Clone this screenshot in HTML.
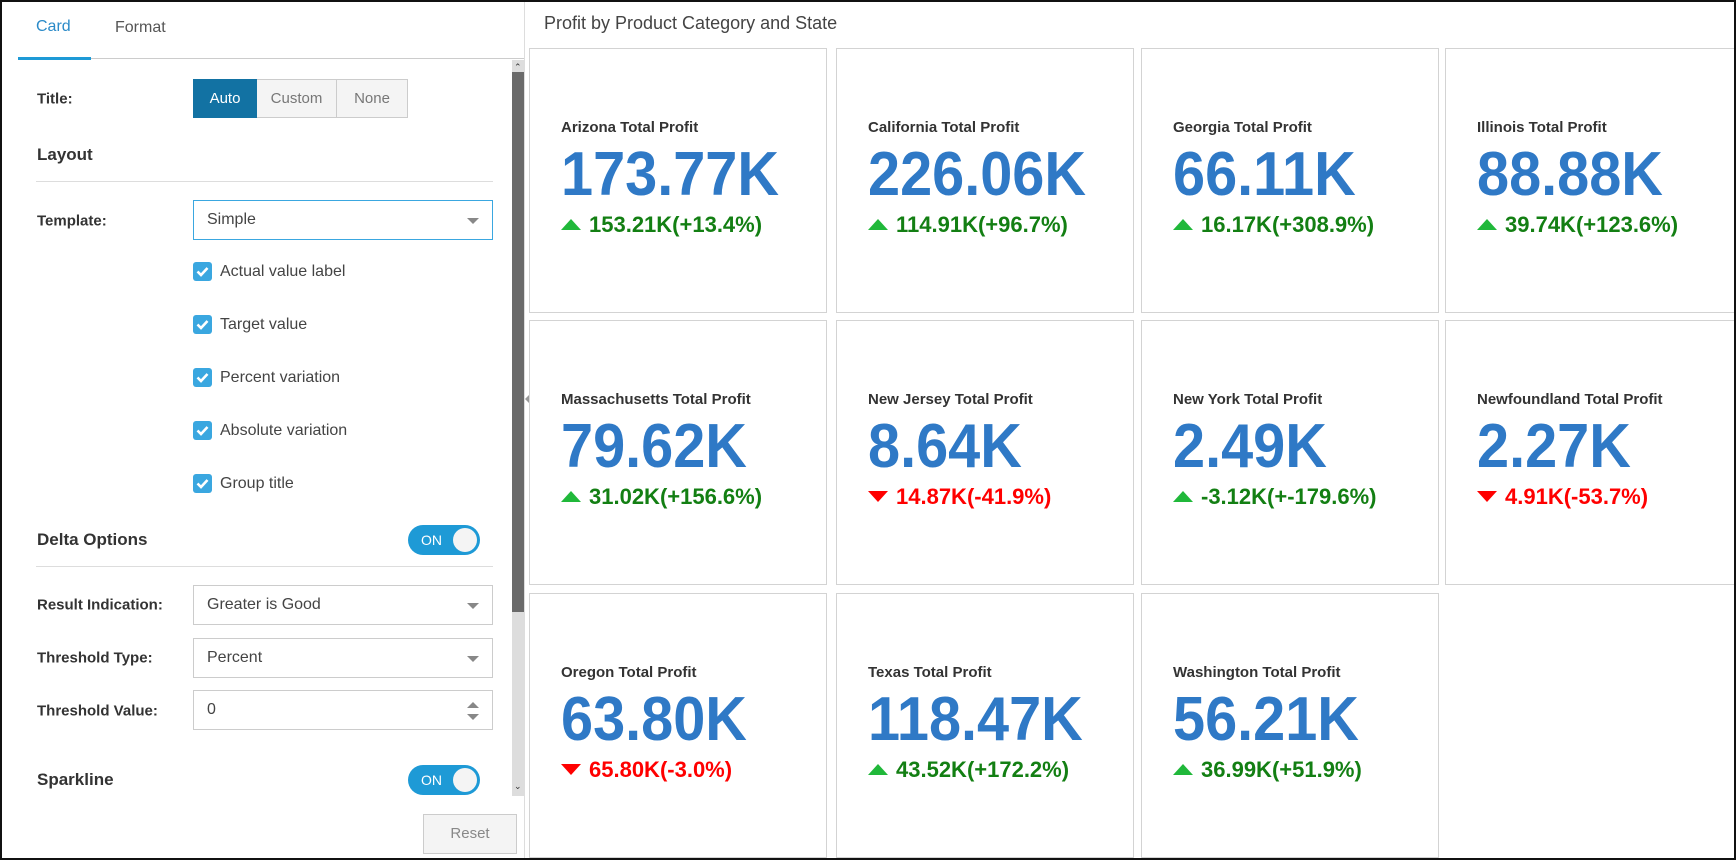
<!DOCTYPE html>
<html><head><meta charset="utf-8"><style>
*{box-sizing:border-box;margin:0;padding:0}
body{width:1736px;height:860px;overflow:hidden;background:#fff;font-family:"Liberation Sans",Arial,sans-serif;color:#333;position:relative}
.frame{position:absolute;left:0;top:0;width:1736px;height:860px;border:2px solid #111;pointer-events:none;z-index:10}
.abs{position:absolute}
.lbl{position:absolute;left:37px;font-size:15px;font-weight:bold;color:#333;transform:translateY(-50%)}
.hdr{position:absolute;left:37px;font-size:17px;font-weight:bold;color:#333;transform:translateY(-50%)}
.sel{position:absolute;left:193px;width:300px;height:40px;border:1px solid #ccc;font-size:16px;color:#444;padding:10px 13px}
.sel .arr{position:absolute;right:13px;top:17px;width:0;height:0;border-left:6px solid transparent;border-right:6px solid transparent;border-top:6px solid #888}
.cb{position:absolute;left:193px;width:19px;height:19px;background:#3aa7e0;border-radius:3px}
.cb svg{position:absolute;left:3px;top:4px}
.cbt{position:absolute;left:220px;font-size:16px;color:#444}
.tog{position:absolute;left:408px;width:72px;height:30px;border-radius:15px;background:#1e9ad6}
.tog span{position:absolute;left:13px;top:7px;color:#fff;font-size:14px}
.tog i{position:absolute;right:3px;top:3px;width:24px;height:24px;border-radius:50%;background:#f4f4f4}
.card{position:absolute;width:298px;height:265px;border:1px solid #d3d3d3;background:#fff}
.card .t{position:absolute;left:31px;top:70px;font-size:15px;font-weight:bold;color:#333;white-space:nowrap}
.card .v{position:absolute;left:31px;top:95px;font-size:62px;font-weight:bold;color:#2f79c6;white-space:nowrap;transform:scaleX(0.93);transform-origin:0 0;line-height:62px}
.card .d{position:absolute;left:31px;top:164px;font-size:22px;font-weight:bold;white-space:nowrap;line-height:24px}
.up{display:inline-block;width:0;height:0;border-left:10px solid transparent;border-right:10px solid transparent;border-bottom:11px solid #20b83a;margin-right:8px;vertical-align:2px}
.dn{display:inline-block;width:0;height:0;border-left:10px solid transparent;border-right:10px solid transparent;border-top:11px solid #f00;margin-right:8px;vertical-align:2px}
.g{color:#137f13}.r{color:#f00}
</style></head><body>
<div class="frame"></div>
<div class="abs" style="left:36px;top:18px;font-size:16px;color:#2a8ac8">Card</div>
<div class="abs" style="left:115px;top:19px;font-size:16px;color:#555">Format</div>
<div class="abs" style="left:18px;top:58px;width:507px;height:1px;background:#ccc"></div>
<div class="abs" style="left:18px;top:57px;width:73px;height:3px;background:#1e9ad6"></div>
<div class="abs" style="left:524px;top:0;width:1px;height:860px;background:#ddd"></div>
<div class="abs" style="left:512px;top:60px;width:12px;height:736px;background:#ddd"></div>
<div class="abs" style="left:512px;top:72px;width:12px;height:540px;background:#6a6a6a"></div>
<div class="abs" style="left:514px;top:62px;font-size:9px;color:#333">&#8963;</div>
<div class="abs" style="left:514px;top:781px;font-size:9px;color:#333">&#8964;</div>

<div class="lbl" style="top:99px">Title:</div>
<div class="abs" style="left:193px;top:79px;width:215px;height:39px;border:1px solid #ccc;background:#f4f4f4;font-size:15px">
 <div class="abs" style="left:-1px;top:-1px;width:64px;height:39px;background:#1272a3;color:#fff;text-align:center;line-height:39px">Auto</div>
 <div class="abs" style="left:63px;top:0;width:80px;height:37px;border-right:1px solid #ccc;color:#777;text-align:center;line-height:37px">Custom</div>
 <div class="abs" style="left:143px;top:0;width:70px;height:37px;color:#777;text-align:center;line-height:37px">None</div>
</div>
<div class="hdr" style="top:155px">Layout</div>
<div class="abs" style="left:36px;top:181px;width:457px;height:1px;background:#ddd"></div>
<div class="lbl" style="top:221px">Template:</div>
<div class="sel" style="top:200px;border-color:#3aa7e0">Simple<div class="arr"></div></div>

<div class="cb" style="top:262px"><svg width="13" height="11"><path d="M1.5 5.5 L5 9 L11.5 2" stroke="#fff" stroke-width="2.6" fill="none"/></svg></div><div class="cbt" style="top:263px">Actual value label</div>
<div class="cb" style="top:315px"><svg width="13" height="11"><path d="M1.5 5.5 L5 9 L11.5 2" stroke="#fff" stroke-width="2.6" fill="none"/></svg></div><div class="cbt" style="top:316px">Target value</div>
<div class="cb" style="top:368px"><svg width="13" height="11"><path d="M1.5 5.5 L5 9 L11.5 2" stroke="#fff" stroke-width="2.6" fill="none"/></svg></div><div class="cbt" style="top:369px">Percent variation</div>
<div class="cb" style="top:421px"><svg width="13" height="11"><path d="M1.5 5.5 L5 9 L11.5 2" stroke="#fff" stroke-width="2.6" fill="none"/></svg></div><div class="cbt" style="top:422px">Absolute variation</div>
<div class="cb" style="top:474px"><svg width="13" height="11"><path d="M1.5 5.5 L5 9 L11.5 2" stroke="#fff" stroke-width="2.6" fill="none"/></svg></div><div class="cbt" style="top:475px">Group title</div>

<div class="hdr" style="top:540px">Delta Options</div>
<div class="tog" style="top:525px"><span>ON</span><i></i></div>
<div class="abs" style="left:36px;top:566px;width:457px;height:1px;background:#ddd"></div>
<div class="lbl" style="top:605px">Result Indication:</div>
<div class="sel" style="top:585px">Greater is Good<div class="arr"></div></div>
<div class="lbl" style="top:658px">Threshold Type:</div>
<div class="sel" style="top:638px">Percent<div class="arr"></div></div>
<div class="lbl" style="top:711px">Threshold Value:</div>
<div class="sel" style="top:690px">0
 <div class="abs" style="right:13px;top:11px;width:0;height:0;border-left:6px solid transparent;border-right:6px solid transparent;border-bottom:6px solid #888"></div>
 <div class="abs" style="right:13px;top:23px;width:0;height:0;border-left:6px solid transparent;border-right:6px solid transparent;border-top:6px solid #888"></div>
</div>
<div class="hdr" style="top:780px">Sparkline</div>
<div class="tog" style="top:765px"><span>ON</span><i></i></div>
<div class="abs" style="left:423px;top:814px;width:94px;height:40px;border:1px solid #ccc;background:#f4f4f4;color:#888;font-size:15px;text-align:center;line-height:38px">Reset</div>
<div class="abs" style="left:525px;top:394px;width:0;height:0;border-top:5px solid transparent;border-bottom:5px solid transparent;border-right:5px solid #999"></div>

<div class="abs" style="left:544px;top:13px;font-size:18px;color:#444">Profit by Product Category and State</div>

<div class="card" style="left:529px;top:48px"><div class="t">Arizona Total Profit</div><div class="v">173.77K</div><div class="d g"><i class="up"></i>153.21K(+13.4%)</div></div>
<div class="card" style="left:836px;top:48px"><div class="t">California Total Profit</div><div class="v">226.06K</div><div class="d g"><i class="up"></i>114.91K(+96.7%)</div></div>
<div class="card" style="left:1141px;top:48px"><div class="t">Georgia Total Profit</div><div class="v">66.11K</div><div class="d g"><i class="up"></i>16.17K(+308.9%)</div></div>
<div class="card" style="left:1445px;top:48px"><div class="t">Illinois Total Profit</div><div class="v">88.88K</div><div class="d g"><i class="up"></i>39.74K(+123.6%)</div></div>

<div class="card" style="left:529px;top:320px"><div class="t">Massachusetts Total Profit</div><div class="v">79.62K</div><div class="d g"><i class="up"></i>31.02K(+156.6%)</div></div>
<div class="card" style="left:836px;top:320px"><div class="t">New Jersey Total Profit</div><div class="v">8.64K</div><div class="d r"><i class="dn"></i>14.87K(-41.9%)</div></div>
<div class="card" style="left:1141px;top:320px"><div class="t">New York Total Profit</div><div class="v">2.49K</div><div class="d g"><i class="up"></i>-3.12K(+-179.6%)</div></div>
<div class="card" style="left:1445px;top:320px"><div class="t">Newfoundland Total Profit</div><div class="v">2.27K</div><div class="d r"><i class="dn"></i>4.91K(-53.7%)</div></div>

<div class="card" style="left:529px;top:593px"><div class="t">Oregon Total Profit</div><div class="v">63.80K</div><div class="d r"><i class="dn"></i>65.80K(-3.0%)</div></div>
<div class="card" style="left:836px;top:593px"><div class="t">Texas Total Profit</div><div class="v">118.47K</div><div class="d g"><i class="up"></i>43.52K(+172.2%)</div></div>
<div class="card" style="left:1141px;top:593px"><div class="t">Washington Total Profit</div><div class="v">56.21K</div><div class="d g"><i class="up"></i>36.99K(+51.9%)</div></div>
</body></html>
